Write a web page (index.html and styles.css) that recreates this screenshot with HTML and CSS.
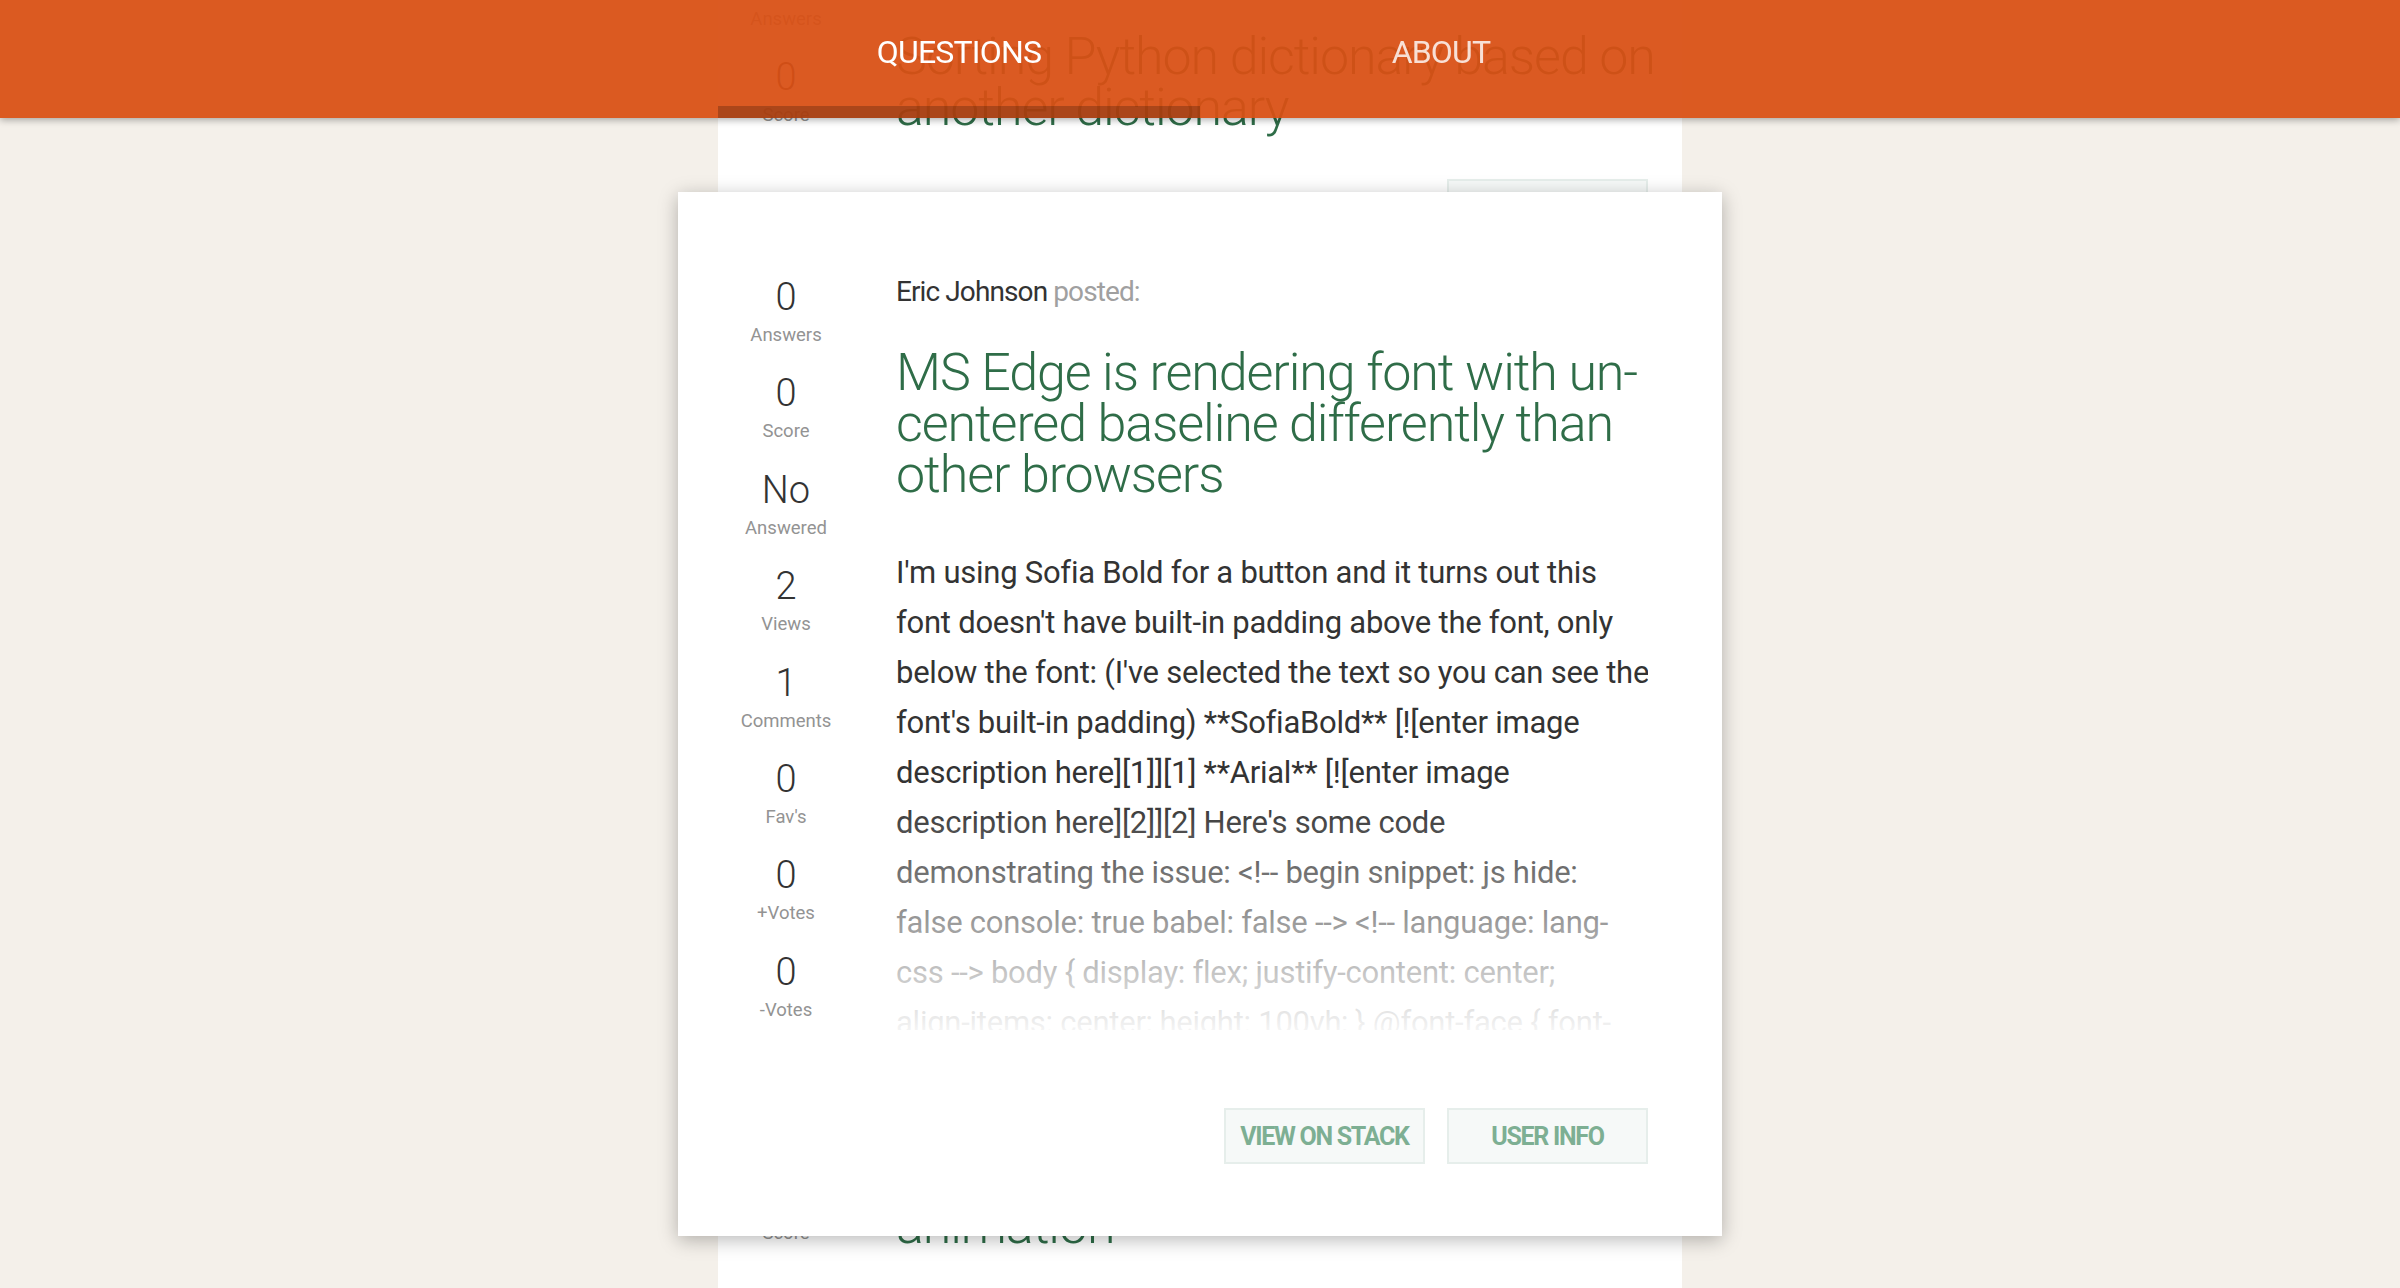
FILE: index.html
```html
<!DOCTYPE html>
<html lang="en">
<head>
<meta charset="utf-8">
<title>Stack Questions</title>
<link rel="stylesheet" href="styles.css">
</head>
<body>
<header class="topbar">
  <nav class="tabs">
    <a class="tab tab-active" href="#">QUESTIONS</a>
    <a class="tab" href="#">ABOUT</a>
  </nav>
</header>

<main class="feed">
  <article class="item">
    <ul class="stats">
      <li class="stat"><span class="stat-num">0</span><span class="stat-label">Answers</span></li>
      <li class="stat"><span class="stat-num">0</span><span class="stat-label">Score</span></li>
    </ul>
    <div class="item-main">
      <p class="meta"><span class="author">Maria Lopez</span> posted:</p>
      <h2 class="title title-list">Sorting Python dictionary based on<br>another dictionary</h2>
      <div class="actions actions-list"><button class="btn" type="button">USER INFO</button></div>
    </div>
  </article>

  <article class="item">
    <ul class="stats">
      <li class="stat"><span class="stat-num">0</span><span class="stat-label">Answers</span></li>
      <li class="stat"><span class="stat-num">0</span><span class="stat-label">Score</span></li>
    </ul>
    <div class="item-main">
      <p class="meta"><span class="author">Eric Johnson</span> posted:</p>
      <h2 class="title title-list">MS Edge is rendering font with un-<br>centered baseline differently than<br>other browsers</h2>
      <div class="actions actions-list"><button class="btn" type="button">USER INFO</button></div>
    </div>
  </article>

  <article class="item">
    <ul class="stats">
      <li class="stat"><span class="stat-num">0</span><span class="stat-label">Answers</span></li>
      <li class="stat"><span class="stat-num">0</span><span class="stat-label">Score</span></li>
    </ul>
    <div class="item-main">
      <p class="meta"><span class="author">Tom Becker</span> posted:</p>
      <h2 class="title title-list">CSS transform flickers during<br>animation</h2>
      <div class="actions actions-list"><button class="btn" type="button">USER INFO</button></div>
    </div>
  </article>
</main>

<section class="card-open">
  <ul class="stats">
    <li class="stat"><span class="stat-num">0</span><span class="stat-label">Answers</span></li>
    <li class="stat"><span class="stat-num">0</span><span class="stat-label">Score</span></li>
    <li class="stat"><span class="stat-num">No</span><span class="stat-label">Answered</span></li>
    <li class="stat"><span class="stat-num">2</span><span class="stat-label">Views</span></li>
    <li class="stat"><span class="stat-num">1</span><span class="stat-label">Comments</span></li>
    <li class="stat"><span class="stat-num">0</span><span class="stat-label">Fav's</span></li>
    <li class="stat"><span class="stat-num">0</span><span class="stat-label">+Votes</span></li>
    <li class="stat"><span class="stat-num">0</span><span class="stat-label">-Votes</span></li>
  </ul>
  <div class="item-main">
    <p class="meta"><span class="author">Eric Johnson</span> posted:</p>
    <h2 class="title">MS Edge is rendering font with un-<br>centered baseline differently than<br>other browsers</h2>
    <div class="excerpt">
      <span class="line">I'm using Sofia Bold for a button and it turns out this</span>
      <span class="line">font doesn't have built-in padding above the font, only</span>
      <span class="line">below the font: (I've selected the text so you can see the</span>
      <span class="line">font's built-in padding) **SofiaBold** [![enter image</span>
      <span class="line">description here][1]][1] **Arial** [![enter image</span>
      <span class="line">description here][2]][2] Here's some code</span>
      <span class="line">demonstrating the issue: &lt;!-- begin snippet: js hide:</span>
      <span class="line">false console: true babel: false --&gt; &lt;!-- language: lang-</span>
      <span class="line">css --&gt; body { display: flex; justify-content: center;</span>
      <span class="line">align-items: center; height: 100vh; } @font-face { font-</span>
      <span class="line">family: 'Sofia Bold'; src: url(...); }</span>
    </div>
    <div class="actions">
      <button class="btn" type="button">VIEW ON STACK</button>
      <button class="btn" type="button">USER INFO</button>
    </div>
  </div>
</section>
</body>
</html>
```

FILE: styles.css
```css
html, body {
  margin: 0;
  padding: 0;
}

body {
  background: #f4f0ea;
  font-family: Roboto, "Liberation Sans", sans-serif;
  color: #333;
  min-height: 100vh;
  overflow: hidden;
}

/* ---------- top bar ---------- */
.topbar {
  position: fixed;
  top: 0;
  left: 0;
  right: 0;
  height: 118px;
  z-index: 10;
  background: rgba(217, 80, 20, 0.94);
  box-shadow: 0 2px 7px rgba(0, 0, 0, 0.32);
}

.tabs {
  width: 964px;
  height: 100%;
  margin: 0 auto;
  display: flex;
}

.tab {
  flex: 1;
  box-sizing: border-box;
  padding-top: 32px;
  text-align: center;
  text-decoration: none;
  font-size: 32px;
  line-height: 40px;
  font-weight: 400;
  letter-spacing: -0.8px;
  color: rgba(255, 255, 255, 0.82);
}

.tab-active {
  color: #fff;
  box-shadow: inset 0 -12px 0 rgba(0, 0, 0, 0.22);
}

/* ---------- list ---------- */
.feed {
  width: 964px;
  margin: -124px auto 0;
  background: #fff;
}

.item {
  box-sizing: border-box;
  min-height: 559px;
  display: grid;
  grid-template-columns: 136px 752px;
  column-gap: 42px;
  align-items: start;
  padding: 80px 34px 72px 0;
  overflow: hidden;
}

/* ---------- stats ---------- */
.stats {
  list-style: none;
  margin: 0;
  padding: 0;
  display: flex;
  flex-direction: column;
  align-items: center;
  gap: 20.4px;
}

.stat {
  display: flex;
  flex-direction: column;
  align-items: center;
}

.stat-num {
  font-size: 38px;
  line-height: 50px;
  font-weight: 300;
  color: #333;
}

.stat-label {
  font-size: 18.5px;
  line-height: 26px;
  color: #939393;
  white-space: nowrap;
}

/* ---------- main column ---------- */
.item-main {
  min-width: 0;
}

.meta {
  margin: 0;
  font-size: 28px;
  line-height: 40px;
  letter-spacing: -0.9px;
  color: #a0a0a0;
}

.author {
  color: #333;
}

.title {
  margin: 34.5px 0 0;
  font-size: 52px;
  line-height: 51px;
  font-weight: 300;
  letter-spacing: -1.1px;
  color: #2f6d48;
  white-space: nowrap;
}

.excerpt {
  position: relative;
  margin-top: 48.5px;
  height: 482px;
  overflow: hidden;
  font-size: 31px;
  line-height: 50px;
  letter-spacing: -0.25px;
  color: #333;
}

.excerpt::after {
  content: "";
  position: absolute;
  inset: 0;
  background: linear-gradient(to bottom, rgba(255, 255, 255, 0) 250px, rgba(255, 255, 255, 0.95) 482px);
}

.line {
  display: block;
  white-space: nowrap;
}

.actions {
  display: flex;
  justify-content: flex-end;
  gap: 22px;
  margin-top: 78px;
}

.actions-list {
  margin-top: 46.5px;
}

.btn {
  box-sizing: border-box;
  width: 201px;
  height: 56px;
  padding: 0;
  border: 2px solid #e6eeeb;
  background: #f6f9f8;
  font-family: Roboto, "Liberation Sans", sans-serif;
  font-size: 25px;
  font-weight: 700;
  letter-spacing: -1.3px;
  color: #7daf93;
  cursor: pointer;
}

/* ---------- expanded card ---------- */
.card-open {
  position: absolute;
  top: 192px;
  left: calc(50% - 522px);
  width: 1044px;
  box-sizing: border-box;
  display: grid;
  grid-template-columns: 136px 752px;
  column-gap: 42px;
  align-items: start;
  padding: 80px 74px 72px 40px;
  background: #fff;
  box-shadow: 0 4px 18px rgba(0, 0, 0, 0.28);
  z-index: 5;
}
```
